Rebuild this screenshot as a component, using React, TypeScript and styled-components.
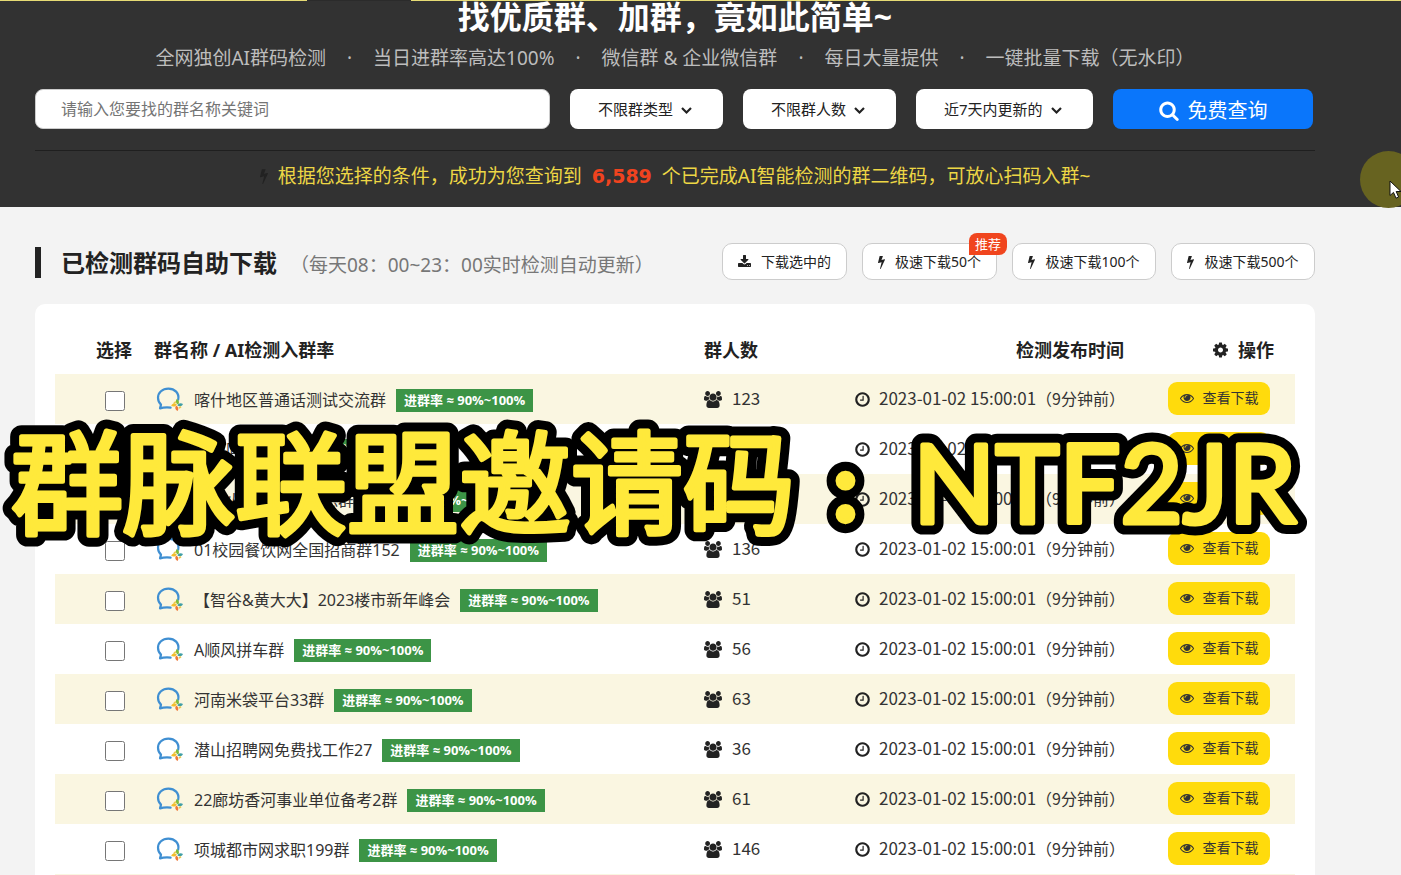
import React from "react";
import styled, { createGlobalStyle } from "styled-components";

const GlobalStyle = createGlobalStyle`
  * { box-sizing: border-box; }
  body {
    margin: 0;
    background: #f3f3f3;
    color: #222;
    font-family: "Noto Sans", "Noto Sans CJK SC", sans-serif;
  }
  button, input, select { font-family: inherit; margin: 0; }
`;

type Glyph = { w: number; d: string };

const glyphs: Record<string, Glyph> = {
  users: {
    w: 1920,
    d: "M593 640q-162 -5 -265 -128h-134q-82 0 -138 40.5t-56 118.5q0 353 124 353q6 0 43.5 -21t97.5 -42.5t119 -21.5q67 0 133 23q-5 -37 -5 -66q0 -139 81 -256zM1664 3q0 -120 -73 -189.5t-194 -69.5h-874q-121 0 -194 69.5t-73 189.5q0 53 3.5 103.5t14 109t26.5 108.5t43 97.5t62 81t85.5 53.5t111.5 20q10 0 43 -21.5t73 -48t107 -48t135 -21.5t135 21.5t107 48t73 48t43 21.5q61 0 111.5 -20t85.5 -53.5t62 -81t43 -97.5t26.5 -108.5t14 -109t3.5 -103.5zM640 1280q0 -106 -75 -181t-181 -75t-181 75t-75 181t75 181t181 75t181 -75t75 -181zM1344 896q0 -159 -112.5 -271.5t-271.5 -112.5t-271.5 112.5t-112.5 271.5t112.5 271.5t271.5 112.5t271.5 -112.5t112.5 -271.5zM1920 671q0 -78 -56 -118.5t-138 -40.5h-134q-103 123 -265 128q81 117 81 256q0 29 -5 66q66 -23 133 -23q59 0 119 21.5t97.5 42.5t43.5 21q124 0 124 -353zM1792 1280q0 -106 -75 -181t-181 -75t-181 75t-75 181t75 181t181 75t181 -75t75 -181z",
  },
  clock: {
    w: 1536,
    d: "M896 992v-448q0 -14 -9 -23t-23 -9h-320q-14 0 -23 9t-9 23v64q0 14 9 23t23 9h224v352q0 14 9 23t23 9h64q14 0 23 -9t9 -23zM1312 640q0 148 -73 273t-198 198t-273 73t-273 -73t-198 -198t-73 -273t73 -273t198 -198t273 -73t273 73t198 198t73 273zM1536 640q0 -209 -103 -385.5t-279.5 -279.5t-385.5 -103t-385.5 103t-279.5 279.5t-103 385.5t103 385.5t279.5 279.5t385.5 103t385.5 -103t279.5 -279.5t103 -385.5z",
  },
  bolt: {
    w: 896,
    d: "M885 970q18 -20 7 -44l-540 -1157q-13 -25 -42 -25q-4 0 -14 2q-17 5 -25.5 19t-4.5 30l197 808l-406 -101q-4 -1 -12 -1q-18 0 -31 11q-18 15 -13 39l201 825q4 14 16 23t28 9h328q19 0 32 -12.5t13 -29.5q0 -8 -5 -18l-171 -463l396 98q8 2 12 2q19 0 34 -15z",
  },
  gear: {
    w: 1536,
    d: "M1024 640q0 106 -75 181t-181 75t-181 -75t-75 -181t75 -181t181 -75t181 75t75 181zM1536 749v-222q0 -12 -8 -23t-20 -13l-185 -28q-19 -54 -39 -91q35 -50 107 -138q10 -12 10 -25t-9 -23q-27 -37 -99 -108t-94 -71q-12 0 -26 9l-138 108q-44 -23 -91 -38q-16 -136 -29 -186q-7 -28 -36 -28h-222q-14 0 -24.5 8.5t-11.5 21.5l-28 184q-49 16 -90 37l-141 -107q-10 -9 -25 -9q-14 0 -25 11q-126 114 -165 168q-7 10 -7 23q0 12 8 23q15 21 51 66.5t54 70.5q-27 50 -41 99l-183 27q-13 2 -21 12.5t-8 23.5v222q0 12 8 23t19 13l186 28q14 46 39 92q-40 57 -107 138q-10 12 -10 24q0 10 9 23q26 36 98.5 107.5t94.5 71.5q13 0 26 -10l138 -107q44 23 91 38q16 136 29 186q7 28 36 28h222q14 0 24.5 -8.5t11.5 -21.5l28 -184q49 -16 90 -37l142 107q9 9 24 9q13 0 25 -10q129 -119 165 -170q7 -8 7 -22q0 -12 -8 -23q-15 -21 -51 -66.5t-54 -70.5q26 -50 41 -98l183 -28q13 -2 21 -12.5t8 -23.5z",
  },
  eye: {
    w: 1792,
    d: "M1664 576q-152 236 -381 353q61 -104 61 -225q0 -185 -131.5 -316.5t-316.5 -131.5t-316.5 131.5t-131.5 316.5q0 121 61 225q-229 -117 -381 -353q133 -205 333.5 -326.5t434.5 -121.5t434.5 121.5t333.5 326.5zM944 960q0 20 -14 34t-34 14q-125 0 -214.5 -89.5t-89.5 -214.5q0 -20 14 -34t34 -14t34 14t14 34q0 86 61 147t147 61q20 0 34 14t14 34zM1792 576q0 -34 -20 -69q-140 -230 -376.5 -368.5t-499.5 -138.5t-499.5 139t-376.5 368q-20 35 -20 69t20 69q140 229 376.5 368t499.5 139t499.5 -139t376.5 -368q20 -35 20 -69z",
  },
  search: {
    w: 1664,
    d: "M1152 704q0 185 -131.5 316.5t-316.5 131.5t-316.5 -131.5t-131.5 -316.5t131.5 -316.5t316.5 -131.5t316.5 131.5t131.5 316.5zM1664 -128q0 -52 -38 -90t-90 -38q-54 0 -90 38l-343 342q-179 -124 -399 -124q-143 0 -273.5 55.5t-225 150t-150 225t-55.5 273.5t55.5 273.5t150 225t225 150t273.5 55.5t273.5 -55.5t225 -150t150 -225t55.5 -273.5q0 -220 -124 -399l343 -343q37 -37 37 -90z",
  },
  download: {
    w: 1664,
    d: "M1280 192q0 26 -19 45t-45 19t-45 -19t-19 -45t19 -45t45 -19t45 19t19 45zM1536 192q0 26 -19 45t-45 19t-45 -19t-19 -45t19 -45t45 -19t45 19t19 45zM1664 416v-320q0 -40 -28 -68t-68 -28h-1472q-40 0 -68 28t-28 68v320q0 40 28 68t68 28h465l135 -136q58 -56 136 -56t136 56l136 136h464q40 0 68 -28t28 -68zM1339 985q17 -41 -14 -70l-448 -448q-18 -19 -45 -19t-45 19l-448 448q-31 29 -14 70q17 39 59 39h256v448q0 26 19 45t45 19h256q26 0 45 -19t19 -45v-448h256q42 0 59 -39z",
  },
};

const IconSvg = styled.svg`
  flex: none;
  display: block;
  fill: currentColor;
`;

function Icon({ name, size }: { name: keyof typeof glyphs; size: number }) {
  const g = glyphs[name];
  return (
    <IconSvg
      aria-hidden="true"
      viewBox={`0 -1536 ${g.w} 1792`}
      height={size}
      width={Math.round((g.w / 1792) * size)}
    >
      <path transform="scale(1,-1)" d={g.d} />
    </IconSvg>
  );
}

const Page = styled.div`
  position: relative;
  height: 100vh;
  overflow: hidden;
`;

const Hero = styled.header`
  background: #323232;
  padding: 0 86px 19px 35px;
`;

const TopStrip = styled.div`
  position: absolute;
  top: 0;
  left: 0;
  right: 0;
  height: 1px;
  background: linear-gradient(90deg, #e6db74 307px, #2b2b2b 307px, #2b2b2b 411px, #e6db74 411px);
`;

const Title = styled.h1`
  margin: 0;
  font-size: 32px;
  line-height: 34px;
  font-weight: 700;
  color: #fff;
  text-align: center;
  white-space: nowrap;
`;

const Features = styled.ul`
  display: flex;
  justify-content: center;
  gap: 21px;
  margin: 12px 0 0;
  padding: 0;
  list-style: none;
  font-size: 19px;
  line-height: 24px;
  color: #bdbdbd;
  white-space: nowrap;
`;

const SearchForm = styled.form`
  display: flex;
  gap: 20px;
  margin-top: 19px;
  padding-right: 2px;
`;

const Keyword = styled.input`
  flex: 1;
  min-width: 0;
  height: 40px;
  padding: 0 25px;
  border: 1px solid #ccc;
  border-radius: 8px;
  background: #fff;
  font-size: 16px;
  &::placeholder { color: #757575; }
`;

const SelectWrap = styled.label<{ $w: number }>`
  position: relative;
  flex: none;
  width: ${(p) => p.$w}px;
`;

const Select = styled.select`
  appearance: none;
  width: 100%;
  height: 40px;
  padding: 0 28px;
  border: 0;
  border-radius: 8px;
  background: #fff;
  color: #222;
  font-size: 15px;
`;

const Chevron = styled.svg`
  position: absolute;
  right: 30px;
  top: 17px;
  pointer-events: none;
`;

const SearchButton = styled.button`
  flex: none;
  display: flex;
  align-items: center;
  justify-content: center;
  gap: 9px;
  width: 200px;
  height: 40px;
  padding: 3px 0 0;
  border: 0;
  border-radius: 8px;
  background: #0a76fb;
  color: #fff;
  font-size: 20px;
  line-height: 24px;
`;

const Result = styled.p`
  display: flex;
  justify-content: center;
  align-items: center;
  gap: 10px;
  margin: 21px 0 0;
  padding-top: 13px;
  border-top: 1px solid #1f1f1f;
  font-size: 19px;
  line-height: 24px;
  color: #edd745;
  white-space: nowrap;
`;

const ResultIcon = styled.span`
  color: #222;
`;

const Total = styled.strong`
  font-family: "DejaVu Sans", sans-serif;
  color: #f0431f;
`;

const Main = styled.main`
  padding: 36px 86px 0 35px;
`;

const SectionHead = styled.div`
  display: flex;
  align-items: center;
  height: 37px;
`;

const Accent = styled.span`
  width: 6px;
  height: 31px;
  margin-top: 2px;
  background: #222;
`;

const SectionTitle = styled.h2`
  margin: 3px 0 0 20px;
  font-size: 24px;
  line-height: 32px;
  font-weight: 700;
  white-space: nowrap;
`;

const SectionNote = styled.small`
  margin: 6px 0 0 13px;
  font-size: 19px;
  line-height: 26px;
  color: #777;
  white-space: nowrap;
`;

const Actions = styled.div`
  display: flex;
  gap: 15px;
  margin-left: auto;
`;

const ActionButton = styled.button<{ $w: number }>`
  position: relative;
  display: flex;
  align-items: center;
  justify-content: center;
  gap: 10px;
  width: ${(p) => p.$w}px;
  height: 37px;
  padding: 0;
  border: 1px solid #ccc;
  border-radius: 10px;
  background: #fff;
  color: #222;
  font-size: 14px;
  line-height: 20px;
  white-space: nowrap;
`;

const Recommend = styled.span`
  position: absolute;
  top: -11px;
  right: -11px;
  padding: 0 6px;
  border-radius: 8px 8px 8px 0;
  background: #f0451e;
  color: #fff;
  font-size: 13px;
  line-height: 22px;
`;

const Card = styled.section`
  margin-top: 24px;
  padding: 20px;
  border-radius: 10px;
  background: #fff;
`;

const Table = styled.table`
  width: 100%;
  table-layout: fixed;
  border-collapse: collapse;
`;

const Col = styled.col<{ $w?: number }>`
  width: ${(p) => (p.$w ? `${p.$w}px` : "auto")};
`;

const Th = styled.th<{ $right?: number }>`
  height: 50px;
  padding: 2px ${(p) => p.$right ?? 0}px 0 9px;
  text-align: ${(p) => (p.$right ? "right" : "left")};
  font-size: 18px;
  line-height: 24px;
  white-space: nowrap;
`;

const ThSelect = styled(Th)`
  padding: 2px 0 0 28px;
  text-align: center;
`;

const Tr = styled.tr`
  height: 50px;
  &:nth-child(odd) { background: #faf6e1; }
`;

const Td = styled.td<{ $left?: number; $right?: number }>`
  padding: 0 ${(p) => p.$right ?? 0}px 0 ${(p) => p.$left ?? 9}px;
`;

const TdSelect = styled.td`
  padding: 0 0 0 30px;
`;

const Check = styled.input`
  display: block;
  width: 20px;
  height: 20px;
  margin: 3px auto 0;
`;

const Line = styled.div<{ $gap: number; $end?: boolean }>`
  display: flex;
  align-items: center;
  justify-content: ${(p) => (p.$end ? "flex-end" : "flex-start")};
  gap: ${(p) => p.$gap}px;
  white-space: nowrap;
`;

const GroupName = styled.span`
  margin-top: 2px;
  font-size: 16px;
  line-height: 24px;
  color: #333;
`;

const Rate = styled.span`
  margin-top: 3px;
  padding: 0 8px;
  background: #3c9446;
  color: #fff;
  font-family: "Open Sans", "Noto Sans CJK SC", sans-serif;
  font-size: 13px;
  line-height: 23px;
  font-weight: 700;
`;

const Figure = styled.span`
  margin-bottom: 2px;
  font-family: "Noto Sans CJK SC", sans-serif;
  font-size: 17px;
  line-height: 24px;
  color: #333;
`;

const Ago = styled.span`
  font-size: 16px;
`;

const ViewButton = styled.button`
  display: flex;
  align-items: center;
  justify-content: center;
  gap: 9px;
  width: 102px;
  height: 33px;
  margin-bottom: 2px;
  padding: 0;
  border: 0;
  border-radius: 9px;
  background: #ffdb0c;
  color: #333;
  font-size: 14px;
  line-height: 20px;
`;

const Sticker = styled.svg`
  position: absolute;
  left: 0;
  top: 410px;
  width: 1320px;
  height: 150px;
  pointer-events: none;
  stroke-linejoin: round;
`;

const Halo = styled.div`
  position: absolute;
  right: -16px;
  top: 151px;
  width: 57px;
  height: 57px;
  border-radius: 50%;
  background: #676320;
`;

const Pointer = styled.svg`
  position: absolute;
  right: 0;
  top: 180px;
`;

function ChatLogo() {
  return (
    <svg width="28" height="24" viewBox="0 0 28 24" fill="none" aria-hidden="true">
      <path
        d="M22.200 12.600C23.600 6 18.600 1.600 12.400 1.600C6.400 1.600 2 5.600 2 10.800C2 13.800 3.300 16 5 17.600L4 21.400C7 20.400 10 20.200 14.600 20.600"
        stroke="#3f8fd2"
        strokeWidth="2.200"
        strokeLinecap="round"
        strokeLinejoin="round"
      />
      <path d="M20.600 12c2.400 1 3 3.400 1.600 5.600c-2.400-.8-3-3.400-1.600-5.600z" fill="#7cba3a" />
      <path d="M27 17c-1 2.400-3.400 3-5.600 1.600c.8-2.400 3.400-3 5.600-1.600z" fill="#3f9fa6" />
      <path d="M21.600 24c-2.400-1-3-3.400-1.600-5.600c2.400.8 3 3.400 1.600 5.600z" fill="#ee7a3b" />
      <path d="M15.200 18.800c1-2.400 3.400-3 5.600-1.600c-.8 2.400-3.400 3-5.600 1.600z" fill="#f3bd2d" />
      <path d="M19.800 14.600l-2.200 2.200M23 21.200l2-1.600" stroke="#e9c64a" strokeWidth="1.600" />
    </svg>
  );
}

const features = [
  "全网独创AI群码检测",
  "当日进群率高达100%",
  "微信群 & 企业微信群",
  "每日大量提供",
  "一键批量下载（无水印）",
];

const filters = [
  { label: "不限群类型", w: 153 },
  { label: "不限群人数", w: 153 },
  { label: "近7天内更新的", w: 177 },
];

const groups: [string, number][] = [
  ["喀什地区普通话测试交流群", 123],
  ["南通同城交友群", 128],
  ["商丘火锅美食交流总群1", 112],
  ["01校园餐饮网全国招商群152", 136],
  ["【智谷&黄大大】2023楼市新年峰会", 51],
  ["A顺风拼车群", 56],
  ["河南米袋平台33群", 63],
  ["潜山招聘网免费找工作27", 36],
  ["22廊坊香河事业单位备考2群", 61],
  ["项城都市网求职199群", 146],
];

export default function App() {
  return (
    <Page>
      <GlobalStyle />
      <Hero>
        <Title>找优质群、加群，竟如此简单~</Title>
        <Features>
          {features.map((f, i) => (
            <React.Fragment key={f}>
              {i > 0 && <li aria-hidden="true">·</li>}
              <li>{f}</li>
            </React.Fragment>
          ))}
        </Features>
        <SearchForm onSubmit={(e) => e.preventDefault()}>
          <Keyword aria-label="群名称关键词" placeholder="请输入您要找的群名称关键词" />
          {filters.map((f) => (
            <SelectWrap key={f.label} $w={f.w}>
              <Select aria-label={f.label}>
                <option>{f.label}</option>
              </Select>
              <Chevron width="13" height="9" viewBox="0 0 13 9" fill="none">
                <path d="M2 2l4.500 4.500L11 2" stroke="#222" strokeWidth="2.200" />
              </Chevron>
            </SelectWrap>
          ))}
          <SearchButton type="submit">
            <Icon name="search" size={21} />
            免费查询
          </SearchButton>
        </SearchForm>
        <Result>
          <ResultIcon>
            <Icon name="bolt" size={16} />
          </ResultIcon>
          <span>根据您选择的条件，成功为您查询到</span>
          <Total>6,589</Total>
          <span>个已完成AI智能检测的群二维码，可放心扫码入群~</span>
        </Result>
      </Hero>
      <TopStrip />

      <Main>
        <SectionHead>
          <Accent />
          <SectionTitle>已检测群码自助下载</SectionTitle>
          <SectionNote>（每天08：00~23：00实时检测自动更新）</SectionNote>
          <Actions>
            <ActionButton type="button" $w={125}>
              <Icon name="download" size={14} />
              下载选中的
            </ActionButton>
            <ActionButton type="button" $w={135}>
              <Icon name="bolt" size={14} />
              极速下载50个
              <Recommend>推荐</Recommend>
            </ActionButton>
            <ActionButton type="button" $w={144}>
              <Icon name="bolt" size={14} />
              极速下载100个
            </ActionButton>
            <ActionButton type="button" $w={144}>
              <Icon name="bolt" size={14} />
              极速下载500个
            </ActionButton>
          </Actions>
        </SectionHead>

        <Card>
          <Table>
            <colgroup>
              <Col $w={90} />
              <Col />
              <Col $w={150} />
              <Col $w={280} />
              <Col $w={170} />
            </colgroup>
            <thead>
              <tr>
                <ThSelect>选择</ThSelect>
                <Th>群名称 / AI检测入群率</Th>
                <Th>群人数</Th>
                <Th $right={1}>检测发布时间</Th>
                <Th $right={21}>
                  <Line $gap={10} $end>
                    <Icon name="gear" size={18} />
                    操作
                  </Line>
                </Th>
              </tr>
            </thead>
            <tbody>
              {groups.map(([name, count]) => (
                <Tr key={name}>
                  <TdSelect>
                    <Check type="checkbox" aria-label={name} />
                  </TdSelect>
                  <Td $left={11}>
                    <Line $gap={10}>
                      <Line $gap={10}>
                        <ChatLogo />
                        <GroupName>{name}</GroupName>
                      </Line>
                      <Rate>进群率 ≈ 90%~100%</Rate>
                    </Line>
                  </Td>
                  <Td>
                    <Line $gap={10}>
                      <Icon name="users" size={17} />
                      <Figure>{count}</Figure>
                    </Line>
                  </Td>
                  <Td>
                    <Line $gap={9} $end>
                      <Icon name="clock" size={17} />
                      <Figure>
                        2023-01-02 15:00:01<Ago>（9分钟前）</Ago>
                      </Figure>
                    </Line>
                  </Td>
                  <Td $right={25}>
                    <Line $gap={0} $end>
                      <ViewButton type="button">
                        <Icon name="eye" size={14} />
                        查看下载
                      </ViewButton>
                    </Line>
                  </Td>
                </Tr>
              ))}
              <Tr>
                <td colSpan={5} />
              </Tr>
            </tbody>
          </Table>
        </Card>
      </Main>

      <Sticker viewBox="0 0 1320 150">
        <use href="#invite" fill="#000" stroke="#000" strokeWidth="23" />
        <g fill="#ffe93b" stroke="#ffe93b" strokeWidth="5">
          <text id="invite" fontFamily="'Noto Sans CJK SC', sans-serif" fontSize="112" fontWeight="400">
            <tspan x="11" y="116">群脉联盟邀请码</tspan>
            <tspan x="828" y="111" fontSize="70" fontWeight="900">：</tspan>
            <tspan x="913" y="113" fontFamily="Lato, sans-serif" fontSize="108" fontWeight="400">NTF2JR</tspan>
          </text>
        </g>
      </Sticker>
      <Halo />
      <Pointer width="12" height="20" viewBox="0 0 12 20">
        <path d="M1 1V15.500L4.500 12.400L7 18.200L9.600 17L7.200 11.500H12L1 1Z" fill="#fff" stroke="#111" />
      </Pointer>
    </Page>
  );
}
